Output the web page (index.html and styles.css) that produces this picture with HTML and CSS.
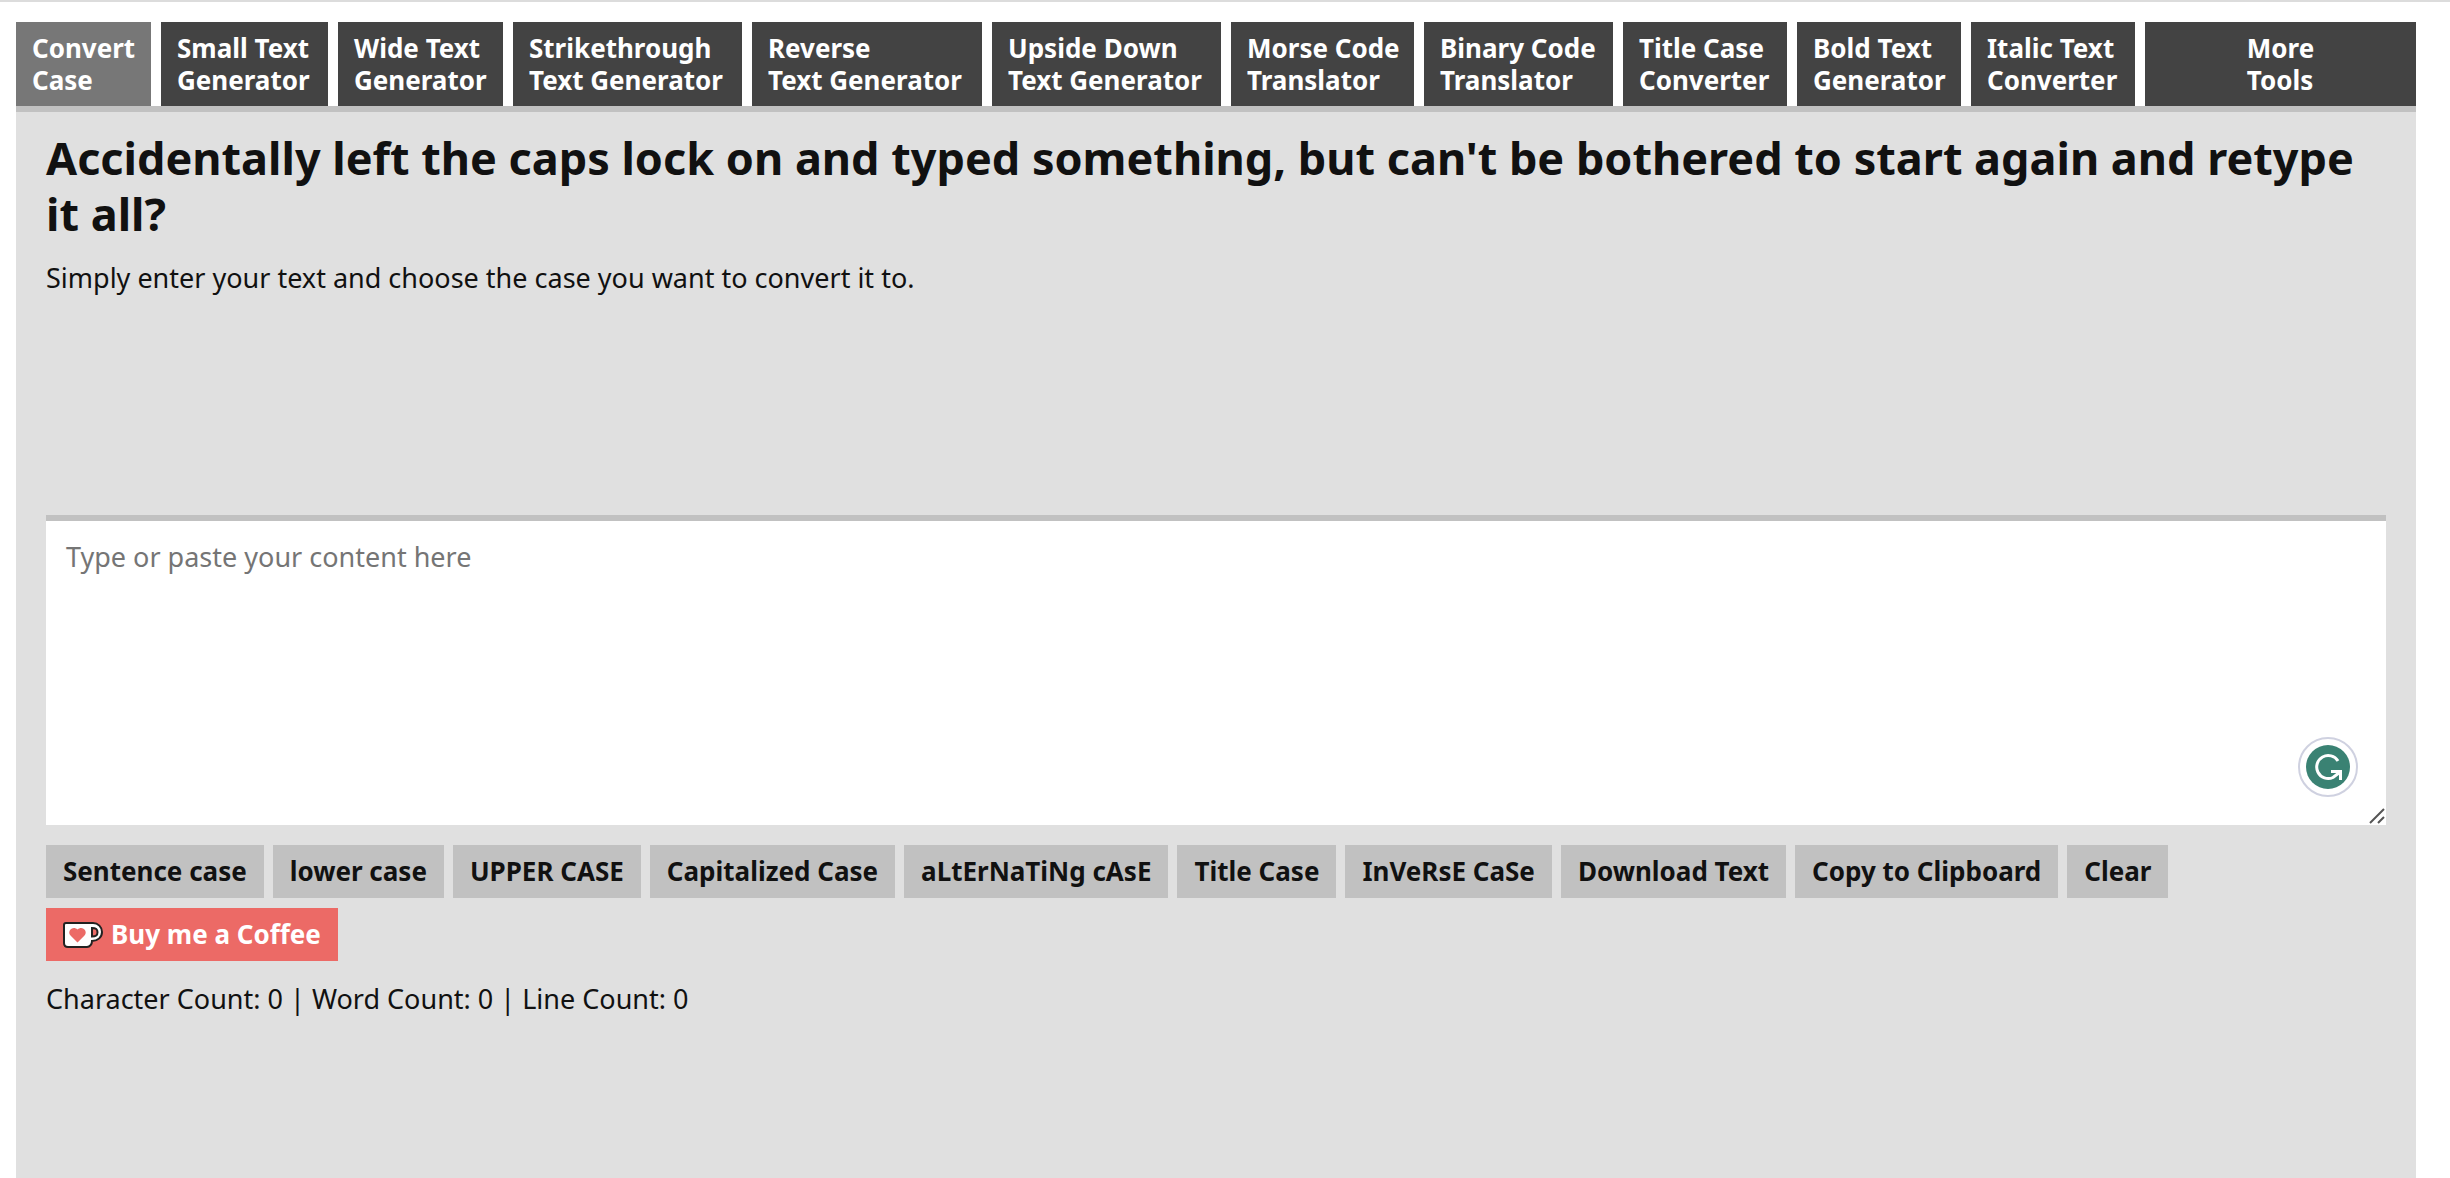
FILE: index.html
```html
<!DOCTYPE html>
<html lang="en">
<head>
    <meta charset="UTF-8">
    <meta name="viewport" content="width=device-width, initial-scale=1.0">
    <title>Convert Case</title>
    <link rel="stylesheet" href="styles.css">
</head>
<body>
    <!-- Tools menu -->
    <nav class="tabs">
        <a class="tab active" href="#">Convert<br>Case</a>
        <a class="tab" href="#">Small Text<br>Generator</a>
        <a class="tab" href="#">Wide Text<br>Generator</a>
        <a class="tab" href="#">Strikethrough<br>Text Generator</a>
        <a class="tab" href="#">Reverse<br>Text Generator</a>
        <a class="tab" href="#">Upside Down<br>Text Generator</a>
        <a class="tab" href="#">Morse Code<br>Translator</a>
        <a class="tab" href="#">Binary Code<br>Translator</a>
        <a class="tab" href="#">Title Case<br>Converter</a>
        <a class="tab" href="#">Bold Text<br>Generator</a>
        <a class="tab" href="#">Italic Text<br>Converter</a>
        <a class="tab more" href="#">More<br>Tools</a>
    </nav>

    <main class="content">
        <h1>Accidentally left the caps lock on and typed something, but can't be bothered to start again and retype it all?</h1>
        <label class="intro" for="content">Simply enter your text and choose the case you want to convert it to.</label>

        <div class="editor">
            <textarea id="content" placeholder="Type or paste your content here"></textarea>
            <!-- Writing assistant badge -->
            <svg class="assistant" viewBox="0 0 60 60" aria-hidden="true">
                <circle cx="30" cy="30" r="29" fill="#fff" stroke="#cfd1e0" stroke-width="2"/>
                <circle cx="30" cy="30" r="22" fill="#3a8273"/>
                <path d="M40 24A11.500 11.500 0 1 0 35 40.500L41.500 35.500" fill="none" stroke="#fff" stroke-width="3"/>
                <path d="M33 34.500h9.500V43" fill="none" stroke="#fff" stroke-width="3"/>
            </svg>
            <svg class="grip" viewBox="0 0 16 16" aria-hidden="true">
                <path d="M1 15L15 1M9 15l6-6" fill="none" stroke="#555" stroke-width="2"/>
            </svg>
        </div>

        <div class="buttons">
            <button type="button" data-case="sentence">Sentence case</button>
            <button type="button" data-case="lower">lower case</button>
            <button type="button" data-case="upper">UPPER CASE</button>
            <button type="button" data-case="capitalized">Capitalized Case</button>
            <button type="button" data-case="alternating">aLtErNaTiNg cAsE</button>
            <button type="button" data-case="title">Title Case</button>
            <button type="button" data-case="inverse">InVeRsE CaSe</button>
            <button type="button" id="download">Download Text</button>
            <button type="button" id="copy">Copy to Clipboard</button>
            <button type="button" id="clear">Clear</button>
        </div>

        <a class="coffee" href="#">
            <svg viewBox="0 0 40 26" aria-hidden="true">
                <path d="M3 1h27c5 0 9 4 9 9s-4 9-10 9c0 3-2 6-5 6H5c-3 0-4-1-4-4V3c0-1 1-2 2-2z" fill="#fff" stroke="#222" stroke-width="2"/>
                <path d="M29 6c4 0 5.500 1 5.500 4.300S33 14.500 29 14.500z" fill="#ec6a66" stroke="#222" stroke-width="2"/>
                <path d="M14.500 20.500L7.500 13.500C3.500 9 10 3 14.500 7.500 19 3 25.500 9 21.500 13.500z" fill="#ec6a66"/>
            </svg>
            Buy me a Coffee
        </a>

        <p class="counts">Character Count: <span id="chars">0</span> | Word Count: <span id="words">0</span> | Line Count: <span id="lines">0</span></p>
    </main>
</body>
</html>
```

FILE: styles.css
```css
* {
    box-sizing: border-box;
}

body {
    margin: 0;
    padding: 20px 34px 0 16px;
    min-height: 100vh;
    display: flex;
    flex-direction: column;
    border-top: 2px solid #dcdcdc;
    background-color: #fff;
    color: #111;
    font-family: "Trebuchet MS", "Noto Sans", sans-serif;
    font-size: 27px;
}

/* Menu */
.tabs {
    display: grid;
    grid-template-columns: 135fr 167fr 165fr 229fr 230fr 229fr 183fr 189fr 164fr 164fr 164fr 271fr;
    gap: 10px;
}

.tab {
    padding: 10px 0 10px 16px;
    background-color: #434343;
    color: #fff;
    font-size: 26px;
    font-weight: bold;
    line-height: 32px;
    text-decoration: none;
    white-space: nowrap;
}

.tab.active {
    background-color: #777;
}

.tab.more {
    display: flex;
    justify-content: center;
    padding: 10px 0;
}

.tab:hover {
    background-color: #777;
}

/* Content */
.content {
    flex: 1;
    padding: 18px 30px 40px;
    border-top: 6px solid #c1c1c1;
    background-color: #e0e0e0;
}

h1 {
    margin: 0 0 16px;
    font-size: 45px;
    line-height: 56px;
}

.intro {
    display: block;
    margin-bottom: 217px;
    line-height: 40px;
}

.editor {
    position: relative;
}

textarea {
    display: block;
    width: 100%;
    height: 310px;
    padding: 18px 20px;
    border: none;
    border-top: 6px solid #c1c1c1;
    background-color: #fff;
    color: #111;
    font: inherit;
    line-height: 36px;
    resize: none;
    outline: none;
}

textarea::placeholder {
    color: #757575;
}

.assistant {
    position: absolute;
    right: 28px;
    bottom: 28px;
    width: 60px;
    height: 60px;
}

.grip {
    position: absolute;
    right: 1px;
    bottom: 1px;
    width: 16px;
    height: 16px;
}

/* Buttons */
.buttons {
    display: flex;
    flex-wrap: wrap;
    gap: 10px 9px;
    margin: 20px 0 10px;
}

button,
.coffee {
    padding: 8px 17px;
    border: none;
    font-family: inherit;
    font-size: 26px;
    font-weight: bold;
    line-height: 37px;
}

button {
    background-color: #c1c1c1;
    color: #111;
    cursor: pointer;
}

button:hover {
    background-color: #aaa;
}

.coffee {
    display: inline-flex;
    align-items: center;
    gap: 8px;
    background-color: #ec6a66;
    color: #fff;
    text-decoration: none;
}

.coffee svg {
    width: 40px;
    height: 26px;
}

.counts {
    margin: 18px 0 0;
    line-height: 40px;
}
```
